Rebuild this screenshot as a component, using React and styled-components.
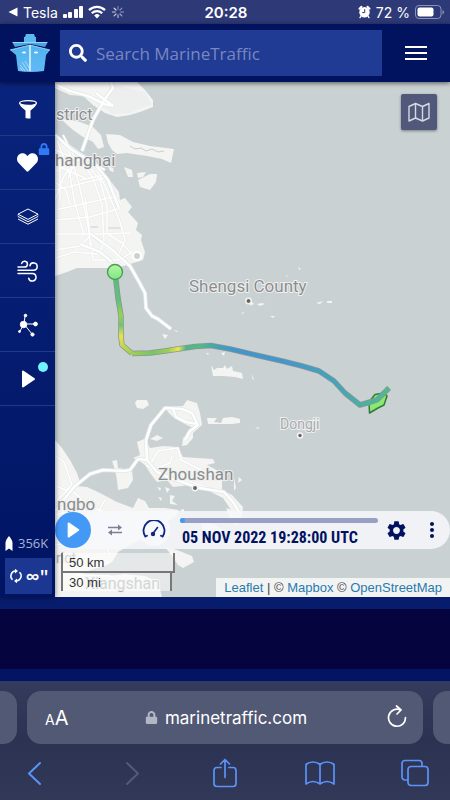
import React, { useState } from 'react';

import styled, { createGlobalStyle } from 'styled-components';

import { FaSearch, FaHeart, FaLock } from 'react-icons/fa';
import { MdSettings, MdMoreVert } from 'react-icons/md';

const GlobalStyle = createGlobalStyle`
  * {
    box-sizing: border-box;
  }
  body {
    margin: 0;
    background-color: #2e3454;
    font-family: Inter, Roboto, sans-serif;
  }
  button {
    padding: 0;
    border: none;
    background: none;
    color: inherit;
    font: inherit;
    cursor: pointer;
  }
`;

/* icons */

const BackToAppIcon = () => (
  <svg width="10" height="10" viewBox="0 0 10 10" fill="#fff">
    <path d="M9.500.5v9L.5 5z" />
  </svg>
);

const SignalIcon = () => (
  <svg width="20" height="14" viewBox="0 0 20 14" fill="#fff">
    <rect x="0" y="9" width="4" height="4" rx="1" />
    <rect x="5" y="7" width="4" height="6" rx="1" />
    <rect x="11" y="4" width="4" height="9" rx="1" />
    <rect x="16" y="1" width="4" height="12" rx="1" />
  </svg>
);

const WifiIcon = () => (
  <svg width="18" height="14" viewBox="0 0 18 14" fill="none" stroke="#fff" strokeWidth="2.3">
    <path d="M1 5.2a11.5 11.5 0 0 1 16 0" />
    <path d="M3.8 8.3a7.4 7.4 0 0 1 10.4 0" />
    <path d="M6.2 10.4a4 4 0 0 1 5.6 0L9 13.4z" fill="#fff" stroke="none" />
  </svg>
);

const SpinnerIcon = () => (
  <svg width="14" height="14" viewBox="-7 -7 14 14" stroke="#fff" strokeWidth="1.2" strokeLinecap="round">
    {[0, 45, 90, 135, 180, 225, 270, 315].map((angle, i) => (
      <path key={angle} d="M0 -2.8V-5.5" transform={`rotate(${angle})`} opacity={0.35 + i * 0.07} />
    ))}
  </svg>
);

const AlarmIcon = () => (
  <svg width="13" height="14" viewBox="0 0 13 14">
    <path d="M1.500 3.800 3.500 1.800M11.500 3.800 9.500 1.800" stroke="#fff" strokeWidth="2" strokeLinecap="round" />
    <circle cx="6.500" cy="7.200" r="5.200" fill="#fff" />
    <path d="m3 11-1 1.600M10 11l1 1.600" stroke="#fff" strokeWidth="1.400" strokeLinecap="round" />
    <path d="M6.700 4.200v3.400H4.200" stroke="#2e3a78" strokeWidth="1" fill="none" />
  </svg>
);

const BatteryIcon = () => (
  <svg width="29" height="14" viewBox="0 0 29 14">
    <rect x=".5" y="0.5" width="25.500" height="13" rx="3.500" fill="none" stroke="#8a93b8" />
    <rect x="2.500" y="2.500" width="16" height="9" rx="2" fill="#fff" />
    <path d="M27.500 5v4.500c2-.8 2-3.700 0-4.500z" fill="#8a93b8" />
  </svg>
);

const ShipLogo = () => (
  <svg width="40" height="38" viewBox="0 0 40 38">
    <defs>
      <linearGradient id="hull" x1="0" y1="0" x2="0" y2="1">
        <stop offset="0" stopColor="#4fb4ee" />
        <stop offset="1" stopColor="#62b9f5" />
      </linearGradient>
    </defs>
    <path d="M16 0h8l1 3h1v5H14V3h1z" fill="#5bb9f0" />
    <path d="M2 8h36l-3 5-15-3-15 3z" fill="#48a6e4" />
    <path d="M0 16 20 11l20 5-4 5-2 16q-14 2-26 0L6 21z" fill="url(#hull)" />
    <path d="M20 11v26" stroke="#e6f6ff" strokeWidth="1.500" />
    <path d="m0 16 20-5 20 5M3 8.500h34" stroke="#b5e2fb" fill="none" strokeWidth=".8" />
    <path d="m10 31 5 6M10 34l3 3M12 28l6 9M15 27l5 8" stroke="#c5e8fb" strokeWidth=".7" />
    <ellipse cx="14" cy="18.500" rx="2" ry="1" fill="#fff" />
    <ellipse cx="26" cy="18.500" rx="2" ry="1" fill="#fff" />
  </svg>
);

const FilterIcon = () => (
  <svg width="20" height="20" viewBox="0 0 20 20">
    <path d="M1 4q1 3.500 6.500 7.500V19l2 .5h3v-8Q18 7.500 19 4z" fill="#fff" />
    <ellipse cx="10" cy="4" rx="8.400" ry="2.400" fill="#071f72" stroke="#fff" strokeWidth="1.300" />
  </svg>
);

const LayersIcon = () => (
  <svg width="22" height="18" viewBox="0 0 22 18" fill="none" stroke="#fff" strokeWidth="1">
    <path d="M11 1 21 6.200 11 11.400 1 6.200z" />
    <path d="m1 8.500 10 5.200 10-5.200M1 11l10 5.200L21 11" />
    <path d="M1 6.200V8.500M21 6.200V8.500" strokeWidth=".5" />
  </svg>
);

const WindIcon = () => (
  <svg width="22" height="22" viewBox="0 0 22 22" fill="none" stroke="#fff" strokeWidth="1.500" strokeLinecap="round">
    <path d="M1 7h6.500a2.900 2.900 0 1 0-2.800-3.600" />
    <path d="M1 10.300h15.500a3.700 3.700 0 1 0-3.600-4.600" />
    <path d="M1 13.600h14.300a3.700 3.700 0 1 1-3.600 4.600" />
  </svg>
);

const NetworkIcon = () => (
  <svg width="22" height="24" viewBox="0 0 22 24" fill="#fff" stroke="#fff">
    <path d="M7 11 8 3M7 11h12M7 11 3 18M7 11l8 10" strokeWidth="1" />
    <circle cx="6.500" cy="11.500" r="3.200" />
    <circle cx="8.500" cy="2.500" r="1.300" />
    <circle cx="18.500" cy="11" r="1.900" />
    <circle cx="2.500" cy="18.500" r="1" />
    <circle cx="15.500" cy="21.500" r="1.600" />
  </svg>
);

const PlayIcon = ({ size = 18 }) => (
  <svg width={size} height={size} viewBox="0 0 18 18" fill="#fff" stroke="#fff" strokeWidth="2" strokeLinejoin="round">
    <path d="M4 1.500 15 9 4 16.500z" />
  </svg>
);

const VesselIcon = () => (
  <svg width="8" height="15" viewBox="0 0 8 15" fill="#fff">
    <path d="M4 0q3.500 4 3.500 7v8L4 12.500.5 15V7Q.5 4 4 0z" />
  </svg>
);

const RefreshIcon = () => (
  <svg width="14" height="14" viewBox="0 0 14 14" fill="none" stroke="#fff" strokeWidth="1.500">
    <path d="M3.500 10.800A5 5 0 0 1 6.500 2.100M10.500 3.200A5 5 0 0 1 7.500 11.900" />
    <path d="M6 -.3 9 2.100 6 4.500zM8 9.500 5 11.900 8 14.300z" fill="#fff" stroke="none" />
  </svg>
);

const FoldedMapIcon = () => (
  <svg width="22" height="20" viewBox="0 0 22 20" fill="none" stroke="#d6d9e1" strokeWidth="1.400" strokeLinejoin="round">
    <path d="M1 4.500 7.500 1.500l7 3 6.500-3v14.500l-6.500 3-7-3L1 19z" />
    <path d="M7.500 1.500v14.500M14.500 4.500V19" />
  </svg>
);

const SwapIcon = () => (
  <svg width="16" height="12" viewBox="0 0 16 12" fill="none" stroke="#7d7f96" strokeWidth="1.500">
    <path d="M1 3.500h12M3 8.500h12" />
    <path d="m11 .5 4 3-4 3zM5 5.500l-4 3 4 3z" fill="#7d7f96" stroke="none" />
  </svg>
);

const GaugeIcon = () => (
  <svg width="24" height="20" viewBox="0 0 24 20" fill="none" stroke="#0f2585" strokeWidth="1.800" strokeLinecap="round">
    <path d="M3.300 16.500a10.500 10.500 0 1 1 17.400 0l-1.700-.8M3.300 16.500l1.700-.8" />
    <path d="m15.500 7.500-4.500 6" strokeWidth="1.600" />
    <circle cx="11" cy="14" r="2.200" fill="#0f2585" stroke="none" />
  </svg>
);

const ReloadIcon = () => (
  <svg width="20" height="24" viewBox="0 0 20 24" fill="none" stroke="#fff" strokeWidth="1.700" strokeLinecap="round" strokeLinejoin="round">
    <path d="M18.500 13.500A8.500 8.500 0 1 1 13.500 6" />
    <path d="M9.500 2 14 6 10 10" />
  </svg>
);

const ChevronLeft = () => (
  <svg width="30" height="30" viewBox="0 0 30 30" fill="none" stroke="currentColor" strokeWidth="2" strokeLinecap="round" strokeLinejoin="round">
    <path d="M20 5 9 15.500 20 26" />
  </svg>
);

const ChevronRight = () => (
  <svg width="30" height="30" viewBox="0 0 30 30" fill="none" stroke="currentColor" strokeWidth="2" strokeLinecap="round" strokeLinejoin="round">
    <path d="m12 5 11 10.500L12 26" />
  </svg>
);

const ShareIcon = () => (
  <svg width="30" height="30" viewBox="0 0 30 30" fill="none" stroke="currentColor" strokeWidth="1.700" strokeLinecap="round" strokeLinejoin="round">
    <path d="M11 9.500H7a3 3 0 0 0-3 3v13a3 3 0 0 0 3 3h16a3 3 0 0 0 3-3v-13a3 3 0 0 0-3-3h-4" />
    <path d="M15 19.500V1.500M10.500 6 15 1.500 19.500 6" />
  </svg>
);

const BookIcon = () => (
  <svg width="30" height="30" viewBox="0 0 30 30" fill="none" stroke="currentColor" strokeWidth="1.700" strokeLinejoin="round">
    <path d="M15 6.500Q12 4 8 4T1 6.500V26q3.500-2.500 7-2.500t7 2.500q3.500-2.500 7-2.500t7 2.500V6.500Q26 4 22 4t-7 2.500zV26" />
  </svg>
);

const TabsIcon = () => (
  <svg width="30" height="30" viewBox="0 0 30 30" fill="none" stroke="currentColor" strokeWidth="1.700">
    <rect x="8" y="8.500" width="20" height="19" rx="3" />
    <path d="M8 22H5a3 3 0 0 1-3-3V5.500a3 3 0 0 1 3-3h14a3 3 0 0 1 3 3v3" />
  </svg>
);

/* map drawing */

const land = [
  'M55 82H137L145 90 153 100V107L140 112 130 115 117 117 105 113 93 105 83 96 70 95 55 88Z',
  'M61 119 70 120 80 122 93 127 101 135 104 147 98 149 93 142 83 137 73 130Z',
  'M106 134 120 135 133 142 150 146 174 149 171 163 162 159 147 156 127 153 117 154 112 150 108 143Z',
  'M124 167 132 170 133 177 128 177Z',
  'M137 173 146 172 143 177 138 178Z',
  'M138 180 150 174 157 174 156 182 150 190 140 187Z',
  'M108 166 113 168 114 172 110 171Z',
  'M55 135 63 140 80 152 93 160 103 172 112 183 119 192 120 200 125 198 132 207 128 212 138 223 136 230 142 235 141 240 145 252 143 260 130 264 117 268 77 268 67 272 55 276Z',
  'M162 334 168 335 165 339ZM173 330 178 331 177 332Z',
  'M211 365 214 370 217 368 223 368 225 365 227 369 232 366 233 371 242 373 243 379 235 377 223 376 213 376Z',
  'M135 403 137 400 147 400 149 405 143 409 137 408Z',
  'M165 407 183 406 187 400 197 403 200 413 202 425 193 433 193 438 187 445 182 446 183 438 193 428 183 423 173 417 168 412Z',
  'M207 418 217 418 214 422 221 423 223 418 232 417 240 419 240 423 232 424 220 424 208 424Z',
  'M150 439 157 435 163 438 157 441Z',
  'M137 442 144 439 150 448 163 446 178 447 183 457 197 458 213 459 215 463 207 465 222 473V490L232 495 243 507 242 516 233 513 223 498 207 490 190 485 173 487 167 480 157 482 150 473 145 465 138 460 133 458 140 455Z',
  'M112 461 117 460 118 468 132 470 133 480 128 488 118 490 117 480 115 470Z',
  'M157 487 161 488 160 491ZM165 487 170 489 167 493ZM158 497 162 498 161 501ZM170 495 175 496 172 501 178 505 170 504ZM180 510 184 509 184 513Z',
  'M234 478 236 488 234 491ZM239 477 242 480 238 483Z',
  'M55 440 62 448 70 460 77 473 80 482 75 486 87 487 100 493 117 502 133 508 138 498 145 501 149 508 165 508 179 510 176 516 164 524 152 533 142 539 130 545 118 552 112 562 105 566 90 570 82 575 100 577 125 574 145 576 158 582 162 597H55Z',
  'M165 547 177 550 192 556 194 562 183 568 178 565 172 556Z',
  'M200 520 214 524 222 530 213 534 202 529Z',
  'M226 508 238 512 243 519 236 526 230 518Z',
  'M251 301 254 304 250 306ZM257 304 262 303 265 304 260 306ZM316 303 323 301 320 304ZM327 301 332 301 332 303 327 303Z',
  'M270 316 275 316 273 318ZM298 267 301 269 299 270ZM251 374 254 379 253 380ZM255 427 260 428 258 429ZM241 313 244 312 243 314Z',
  'M206 353 209 353 208 355ZM221 353 225 352 224 356ZM286 275 288 276 287 277Z',
];

const streets = [
  'M55 172 82 157 105 170M55 190 104 178M55 210 118 196M55 220 90 217 121 208M55 234 100 234 130 233M55 250 80 246 92 234M55 258 75 252 97 254',
  'M57 140 70 175 74 200 84 235M66 142 78 180 88 225 91 250M60 160V200M72 148 93 178 102 204 104 240 100 252M55 150 85 163 100 180 107 206V234',
  'M55 200 64 176 77 160M63 135 76 160 68 178M55 182 66 190 70 205M80 180 104 175 121 205M55 165 85 178M85 198 90 234M90 234 111 252 125 265',
  'M91 243 93 260H120L132 252M108 234 122 243 132 254M95 166 107 190 120 222 125 240 117 258',
  'M56 456 64 462 72 485 66 490 55 486M55 502 70 488 85 505 105 512M78 495 92 515 112 525M55 515 75 510 100 530 110 555M90 498 82 515 100 520M105 500 94 520',
  'M55 545 85 540 105 530M62 505 66 540M100 540 112 548M112 525 140 528 165 512M75 575 110 576 130 590',
  'M151 463 158 451 178 448 181 460 197 468 212 475M146 465 165 475 190 482 215 490M151 470 170 463 172 456',
];

const roads = [
  'M55 84 70 91 88 96 104 104 113 106',
  'M111 82 113 88 105 99 93 120 82 151',
  'M96 93 113 106',
  'M55 135 72 150 95 164 108 180 119 208',
  'M91 234 110 248 130 266 138 280 145 293 146 308 152 316 158 319 171 329',
  'M80 244 100 252 112 262',
  'M55 511 74 487 90 474 103 470 124 471 130 470 138 459 147 460 146 440 151 425 165 408 182 409 192 413 198 425 190 431 185 440',
  'M173 409 176 417 186 422 198 424',
  'M147 460 157 472 170 478 200 488 224 492 233 502 240 514',
];

/* the labels on the west edge run on beyond the map, so only their visible part is kept */
const labels = [
  { name: 'strict', x: 56, y: 120, size: 16 },
  { name: 'hanghai', x: 55, y: 166, size: 17 },
  { name: 'Shengsi County', x: 189, y: 292, size: 17 },
  { name: 'Dongji', x: 280, y: 429, size: 14, pale: true },
  { name: 'Zhoushan', x: 158, y: 480, size: 17 },
  { name: 'ngbo', x: 57, y: 510, size: 17 },
  { name: 'rict', x: 56, y: 563, size: 14, pale: true },
  { name: 'Xiangshan', x: 85, y: 589, size: 16, pale: true },
];

const trackStart = 'M115 272 118 298 121 316 121 337 122 345 132 353.500';
const trackEnd = 'M132 353.500 150 353 165 351 178 349 195 346.500 211 345.500 230 349 260 356 282 361 302 366 319 371 334 381 345 393 360 405 377 400 389 388';

const ChartMap = () => (
  <MapDrawing viewBox="55 82 395 515" preserveAspectRatio="xMinYMin slice" role="img" aria-label="Vessel track map">
    <defs>
      <linearGradient id="speedStart" gradientUnits="userSpaceOnUse" x1="0" y1="272" x2="0" y2="354">
        <stop offset="0" stopColor="#56be7e" />
        <stop offset=".35" stopColor="#60c17a" />
        <stop offset=".52" stopColor="#98d157" />
        <stop offset=".65" stopColor="#72c56c" />
        <stop offset=".78" stopColor="#e6e44d" />
        <stop offset="1" stopColor="#9fce55" />
      </linearGradient>
      <linearGradient id="speedEnd" gradientUnits="userSpaceOnUse" x1="132" y1="0" x2="389" y2="0">
        <stop offset="0" stopColor="#9fce55" />
        <stop offset=".08" stopColor="#76c666" />
        <stop offset=".14" stopColor="#9bcd58" />
        <stop offset=".18" stopColor="#eae64c" />
        <stop offset=".21" stopColor="#4db58d" />
        <stop offset=".26" stopColor="#55bb81" />
        <stop offset=".33" stopColor="#44a3b4" />
        <stop offset=".4" stopColor="#4096cb" />
        <stop offset=".6" stopColor="#4298cb" />
        <stop offset=".8" stopColor="#46a4b8" />
        <stop offset="1" stopColor="#50ba8c" />
      </linearGradient>
      <linearGradient id="origin" x1="0" y1="0" x2="0" y2="1">
        <stop offset="0" stopColor="#b5f7a2" />
        <stop offset="1" stopColor="#7de883" />
      </linearGradient>
    </defs>
    <g fill="#f4f4f2">
      {land.map((d) => <path key={d} d={d} />)}
    </g>
    <path d="M55 84 70 90 88 94 104 102 111 84 145 92 151 104 130 113 113 114 83 94Z" fill="#ecefee" />
    <path d="M89 227H98M106 228H121" stroke="#c9d1d3" />
    <g fill="none" stroke="#e9ebea" strokeWidth="2.600" strokeLinejoin="round">
      {streets.map((d) => <path key={d} d={d} />)}
    </g>
    <g fill="none" stroke="#fff" strokeWidth="1.500" strokeLinejoin="round">
      {streets.map((d) => <path key={d} d={d} />)}
    </g>
    <g fill="none" stroke="#e3e7e7" strokeWidth="4" strokeLinejoin="round">
      {roads.map((d) => <path key={d} d={d} />)}
    </g>
    <g fill="none" stroke="#fdfefe" strokeWidth="2.600" strokeLinejoin="round">
      {roads.map((d) => <path key={d} d={d} />)}
    </g>
    <circle cx="137" cy="256" r="4" fill="#cbd2d4" stroke="#fff" strokeWidth="2" />
    <path d="M130 146 135 149 141 148 146 151 152 149 158 152 164 151" fill="none" stroke="#c9d0d2" />
    <g fill="#666" stroke="#f4f4f2" strokeWidth="1.500">
      <circle cx="248.500" cy="301" r="2.700" />
      <circle cx="300" cy="435.500" r="2.500" />
      <circle cx="195" cy="488" r="2.700" />
    </g>
    {labels.map(({ name, x, y, size, pale }) => (
      <MapLabel key={name} x={x} y={y} $size={size} $pale={pale}>
        {name}
      </MapLabel>
    ))}
    <path d="M369.500 413 369 402 375 394.500 384 393 387 396 384 405 378 408Z" fill="#8ce96f" stroke="#2f7a3d" strokeWidth="1.500" strokeLinejoin="round" />
    <g fill="none" strokeLinejoin="round">
      <path d={trackStart} stroke="#8b9394" strokeWidth="5.500" />
      <path d={trackEnd} stroke="#8b9394" strokeWidth="5.500" />
      <path d={trackStart} stroke="url(#speedStart)" strokeWidth="4" />
      <path d={trackEnd} stroke="url(#speedEnd)" strokeWidth="4" />
    </g>
    <path d="M371 410 371.500 405 379 402 385 397 382.500 404 377 407Z" fill="#8ce96f" />
    <circle cx="115" cy="272" r="7.500" fill="url(#origin)" stroke="#4d9b57" strokeWidth="1.400" />
  </MapDrawing>
);

const sideItems = [
  { label: 'Filters', icon: <FilterIcon /> },
  { label: 'My fleets', icon: <FaHeart size={21} />, locked: true },
  { label: 'Layers', icon: <LayersIcon /> },
  { label: 'Weather', icon: <WindIcon /> },
  { label: 'Density', icon: <NetworkIcon /> },
  { label: 'Playback', icon: <PlayIcon />, dot: true },
];

function StatusBar() {
  return (
    <StyledStatusBar>
      <StatusGroup>
        <BackToAppIcon />
        <span>Tesla</span>
        <SignalIcon />
        <WifiIcon />
        <SpinnerIcon />
      </StatusGroup>
      <Clock>20:28</Clock>
      <StatusGroup $end>
        <AlarmIcon />
        <span>72 %</span>
        <BatteryIcon />
      </StatusGroup>
    </StyledStatusBar>
  );
}

function Playback() {
  const [time, setTime] = useState(0);

  const handleChangeTime = (e) => {
    setTime(Number(e.target.value));
  };

  return (
    <StyledPlayback>
      <PlayButton aria-label="Play">
        <PlayIcon size={16} />
      </PlayButton>
      <RoundButton aria-label="Repeat">
        <SwapIcon />
      </RoundButton>
      <RoundButton aria-label="Speed">
        <GaugeIcon />
      </RoundButton>
      <Timeline>
        <TimeRange type="range" min="0" max="100" aria-label="Time" value={time} onChange={handleChangeTime} />
        <TimeText>05 NOV 2022 19:28:00 UTC</TimeText>
      </Timeline>
      <PlainButton aria-label="Settings">
        <MdSettings size={23} />
      </PlainButton>
      <PlainButton aria-label="More">
        <MdMoreVert size={24} />
      </PlainButton>
    </StyledPlayback>
  );
}

export default function App() {
  return (
    <>
      <GlobalStyle />
      <Screen>
        <StatusBar />
        <Header>
          <LogoLink href="#" aria-label="Home">
            <ShipLogo />
          </LogoLink>
          <SearchBox>
            <FaSearch size={18} />
            <SearchInput type="text" aria-label="Search" placeholder="Search MarineTraffic" />
          </SearchBox>
          <MenuButton aria-label="Menu">
            <MenuLine />
            <MenuLine />
            <MenuLine />
          </MenuButton>
        </Header>
        <Content>
          <Sidebar>
            {sideItems.map(({ label, icon, locked, dot }) => (
              <SideButton key={label} aria-label={label}>
                {icon}
                {locked && <LockBadge><FaLock size={12} /></LockBadge>}
                {dot && <DotBadge />}
              </SideButton>
            ))}
            <SideFooter>
              <VesselCount>
                <VesselIcon />
                356K
              </VesselCount>
              <RefreshButton>
                <RefreshIcon />
                <span>∞"</span>
              </RefreshButton>
            </SideFooter>
          </Sidebar>
          <MapPane>
            <ChartMap />
            <MapButton aria-label="Map style">
              <FoldedMapIcon />
            </MapButton>
            <Playback />
            <Scale>
              <ScaleLine $width={114}>50 km</ScaleLine>
              <ScaleLine $width={111} $lower>30 mi</ScaleLine>
            </Scale>
            <Attribution>
              <a href="#">Leaflet</a> | © <a href="#">Mapbox</a> © <a href="#">OpenStreetMap</a>
            </Attribution>
          </MapPane>
        </Content>
        <AdStrip />
        <Browser>
          <TabRow>
            <TabEdge $side="left" />
            <AddressBar>
              <TextSizeButton aria-label="Text size">
                <small>A</small>A
              </TextSizeButton>
              <Address>
                <FaLock size={13} />
                <span>marinetraffic.com</span>
              </Address>
              <ReloadButton aria-label="Reload">
                <ReloadIcon />
              </ReloadButton>
            </AddressBar>
            <TabEdge $side="right" />
          </TabRow>
          <Toolbar>
            <ToolButton aria-label="Back"><ChevronLeft /></ToolButton>
            <ToolButton aria-label="Forward" disabled><ChevronRight /></ToolButton>
            <ToolButton aria-label="Share"><ShareIcon /></ToolButton>
            <ToolButton aria-label="Bookmarks"><BookIcon /></ToolButton>
            <ToolButton aria-label="Tabs"><TabsIcon /></ToolButton>
          </Toolbar>
        </Browser>
      </Screen>
    </>
  );
}

const Screen = styled.div`
  min-height: 100vh;
  display: flex;
  flex-direction: column;
`;

const StyledStatusBar = styled.div`
  height: 24px;
  padding: 0 6px 0 8px;
  display: grid;
  grid-template-columns: 1fr auto 1fr;
  align-items: center;
  background-color: #2e3a78;
  color: #fff;
  font-size: 14px;
`;

const StatusGroup = styled.div`
  display: flex;
  align-items: center;
  justify-content: ${({ $end }) => ($end ? 'flex-end' : 'flex-start')};
  gap: 5px;
  svg {
    flex: none;
  }
`;

const Clock = styled.div`
  font-weight: 600;
  font-size: 15px;
`;

const Header = styled.header`
  position: relative;
  z-index: 2;
  height: 58px;
  padding: 6px 0;
  display: flex;
  align-items: stretch;
  background-color: #01125f;
  box-shadow: 0 1px 5px rgba(0, 0, 0, 0.6);
`;

const LogoLink = styled.a`
  width: 60px;
  display: flex;
  align-items: center;
  justify-content: center;
`;

const SearchBox = styled.label`
  flex: 1;
  min-width: 0;
  padding: 0 9px;
  display: flex;
  align-items: center;
  gap: 9px;
  background-color: #203b94;
  color: #fff;
  svg {
    flex: none;
  }
`;

const SearchInput = styled.input`
  flex: 1;
  min-width: 0;
  padding: 0;
  border: none;
  outline: none;
  background: none;
  color: #fff;
  font-family: 'Open Sans', 'Noto Sans', sans-serif;
  font-size: 17px;
  &::placeholder {
    color: #7987bf;
    opacity: 1;
  }
`;

const MenuButton = styled.button`
  width: 68px;
  display: flex;
  flex-direction: column;
  align-items: center;
  justify-content: center;
  gap: 4px;
`;

const MenuLine = styled.span`
  width: 22px;
  height: 2px;
  background-color: #fff;
`;

const Content = styled.main`
  flex: 1;
  min-height: 500px;
  display: flex;
`;

const Sidebar = styled.nav`
  position: relative;
  z-index: 1;
  width: 55px;
  display: flex;
  flex-direction: column;
  background: linear-gradient(#09247d, #001463);
  box-shadow: 0 0 5px rgba(0, 0, 0, 0.5);
`;

const SideButton = styled.button`
  && {
    position: relative;
    height: 54px;
    display: flex;
    align-items: center;
    justify-content: center;
    border-bottom: 1px solid #203a85;
    color: #fff;
  }
`;

const LockBadge = styled.span`
  position: absolute;
  top: 3px;
  right: 5px;
  color: #2f7bf6;
`;

const DotBadge = styled.span`
  position: absolute;
  top: 10px;
  right: 7px;
  width: 10px;
  height: 10px;
  border-radius: 50%;
  background-color: #71f3ff;
`;

const SideFooter = styled.div`
  margin-top: auto;
  padding: 0 3px 3px 5px;
  color: #fff;
  font-family: 'Open Sans', sans-serif;
`;

const VesselCount = styled.div`
  height: 30px;
  display: flex;
  align-items: center;
  gap: 5px;
  color: #a9b1d4;
  font-size: 13px;
`;

const RefreshButton = styled.button`
  && {
    width: 100%;
    height: 36px;
    display: flex;
    align-items: center;
    justify-content: center;
    gap: 3px;
    background-color: #1c3791;
    font-size: 20px;
    font-weight: 600;
  }
`;

const MapPane = styled.section`
  position: relative;
  flex: 1;
  min-width: 0;
  overflow: hidden;
  background-color: #c9d1d3;
`;

const MapDrawing = styled.svg`
  position: absolute;
  width: 100%;
  height: 100%;
`;

const MapLabel = styled.text`
  font-family: Roboto, sans-serif;
  font-size: ${({ $size }) => $size}px;
  fill: ${({ $pale }) => ($pale ? '#a9abab' : '#8b8d8d')};
  stroke: #eef0f0;
  stroke-width: 2px;
  paint-order: stroke;
`;

const MapButton = styled.button`
  && {
    position: absolute;
    top: 12px;
    right: 13px;
    width: 36px;
    height: 36px;
    display: flex;
    align-items: center;
    justify-content: center;
    border-radius: 2px;
    background-color: #50597a;
    box-shadow: 0 1px 3px rgba(0, 0, 0, 0.4);
  }
`;

const StyledPlayback = styled.div`
  position: absolute;
  left: 0;
  right: 0;
  bottom: 48px;
  height: 38px;
  display: flex;
  align-items: center;
  border-radius: 19px;
  background-color: rgba(247, 248, 252, 0.85);
  color: #02125f;
`;

const PlayButton = styled.button`
  && {
    width: 36px;
    height: 36px;
    margin-right: 8px;
    display: flex;
    align-items: center;
    justify-content: center;
    border-radius: 50%;
    background-color: #4499f7;
  }
`;

const RoundButton = styled.button`
  && {
    width: 32px;
    height: 32px;
    margin-right: 7px;
    display: flex;
    align-items: center;
    justify-content: center;
    border-radius: 50%;
    background-color: #f6f8fc;
  }
`;

const Timeline = styled.div`
  flex: 1;
  min-width: 0;
  margin-left: 3px;
  padding-top: 6px;
  display: flex;
  flex-direction: column;
  gap: 5px;
`;

const TimeRange = styled.input`
  width: 100%;
  height: 5px;
  margin: 0;
  appearance: none;
  border-radius: 3px;
  background-color: #98a0c4;
  &::-webkit-slider-thumb {
    appearance: none;
    width: 5px;
    height: 5px;
    border-radius: 50%;
    background-color: #4499f7;
  }
`;

const TimeText = styled.time`
  padding-left: 2px;
  font-family: 'Roboto Condensed', 'Liberation Sans Narrow', Roboto, sans-serif;
  font-size: 16px;
  line-height: 20px;
  font-weight: 700;
  white-space: nowrap;
`;

const PlainButton = styled.button`
  width: 36px;
  height: 36px;
  display: flex;
  align-items: center;
  justify-content: center;
`;

const Scale = styled.div`
  position: absolute;
  left: 6px;
  bottom: 6px;
  color: #333;
  font-family: 'Liberation Sans', Arial, sans-serif;
  font-size: 13px;
  line-height: 20px;
`;

const ScaleLine = styled.div`
  width: ${({ $width }) => $width}px;
  height: 20px;
  padding-left: 6px;
  border: 2px solid #777;
  border-top-style: ${({ $lower }) => ($lower ? 'solid' : 'none')};
  border-bottom-style: ${({ $lower }) => ($lower ? 'none' : 'solid')};
  margin-top: ${({ $lower }) => ($lower ? '-2px' : '0')};
  background-color: rgba(255, 255, 255, 0.5);
`;

const Attribution = styled.div`
  position: absolute;
  right: 0;
  bottom: 0;
  height: 19px;
  padding: 0 8px;
  background-color: rgba(255, 255, 255, 0.75);
  color: #444;
  font-family: 'Liberation Sans', Arial, sans-serif;
  font-size: 13px;
  line-height: 20px;
  white-space: nowrap;
  a {
    color: #2a7aad;
    text-decoration: none;
  }
`;

const AdStrip = styled.aside`
  height: 84px;
  border-top: 12px solid #071c6c;
  border-bottom: 12px solid #021463;
  background-color: #05043f;
`;

const Browser = styled.footer`
  padding: 10px 0 12px;
  background: linear-gradient(#343b5c, #2c3251 50%, #323858);
  color: #fff;
`;

const TabRow = styled.div`
  display: flex;
  gap: 10px;
`;

const TabEdge = styled.span`
  width: 17px;
  border-radius: ${({ $side }) => ($side === 'left' ? '0 14px 14px 0' : '14px 0 0 14px')};
  background-color: #525975;
`;

const AddressBar = styled.div`
  flex: 1;
  min-width: 0;
  height: 53px;
  padding: 0 16px 0 18px;
  display: grid;
  grid-template-columns: 1fr auto 1fr;
  align-items: center;
  border-radius: 14px;
  background-color: #525975;
`;

const TextSizeButton = styled.button`
  && {
    justify-self: start;
    font-size: 20px;
    small {
      font-size: 14px;
    }
  }
`;

const Address = styled.button`
  && {
    display: flex;
    align-items: center;
    gap: 7px;
    font-size: 17px;
    svg {
      color: #b3b6c5;
    }
  }
`;

const ReloadButton = styled.button`
  justify-self: end;
`;

const Toolbar = styled.div`
  padding: 14px 20px 0;
  display: flex;
  justify-content: space-between;
`;

const ToolButton = styled.button`
  && {
    width: 30px;
    height: 30px;
    color: ${({ disabled }) => (disabled ? '#555b72' : '#5b93f8')};
  }
`;
